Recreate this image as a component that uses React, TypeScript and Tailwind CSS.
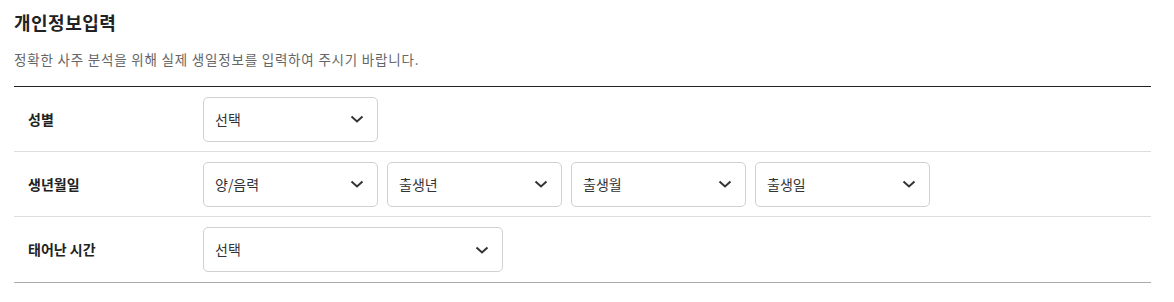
import { useState } from 'react';

type Field = {
  key: string;
  placeholder: string;
  options: string[];
  wide?: boolean;
};

const years = Array.from({ length: 100 }, (_, i) => `${2024 - i}년`);
const months = Array.from({ length: 12 }, (_, i) => `${i + 1}월`);
const days = Array.from({ length: 31 }, (_, i) => `${i + 1}일`);
const hours = ['모름', '자시 (23:30~01:29)', '축시 (01:30~03:29)', '인시 (03:30~05:29)', '묘시 (05:30~07:29)'];

const rows: { label: string; fields: Field[] }[] = [
  { label: '성별', fields: [{ key: 'gender', placeholder: '선택', options: ['남성', '여성'] }] },
  {
    label: '생년월일',
    fields: [
      { key: 'calendar', placeholder: '양/음력', options: ['양력', '음력', '음력(윤달)'] },
      { key: 'year', placeholder: '출생년', options: years },
      { key: 'month', placeholder: '출생월', options: months },
      { key: 'day', placeholder: '출생일', options: days },
    ],
  },
  { label: '태어난 시간', fields: [{ key: 'time', placeholder: '선택', options: hours, wide: true }] },
];

function Chevron() {
  return (
    <svg
      width="14"
      height="8"
      viewBox="0 0 14 8"
      fill="none"
      className="pointer-events-none absolute right-[14px] top-1/2 -translate-y-1/2"
    >
      <path d="M1.5 1.5L7 6.5L12.5 1.5" stroke="#333" strokeWidth="2" />
    </svg>
  );
}

function SelectBox({ field, value, onChange }: { field: Field; value: string; onChange: (v: string) => void }) {
  return (
    <div className={`relative h-[45px] ${field.wide ? 'w-[300px]' : 'w-[175px]'}`}>
      <select
        value={value}
        onChange={(e) => onChange(e.target.value)}
        className="h-full w-full appearance-none rounded-[5px] border border-[#d0d0d0] bg-white pl-[11px] pr-8 text-[14px] text-[#333] outline-none"
      >
        <option value="">{field.placeholder}</option>
        {field.options.map((o) => (
          <option key={o} value={o}>
            {o}
          </option>
        ))}
      </select>
      <Chevron />
    </div>
  );
}

export default function App() {
  const [values, setValues] = useState<Record<string, string>>({});

  return (
    <div
      className="bg-white px-[14px] pt-[10px] pb-5 text-[#222]"
      style={{ fontFamily: '"Noto Sans CJK KR", "Noto Sans", sans-serif' }}
    >
      <h2 className="text-[18px] font-bold leading-6 tracking-[0.5px] text-[#222]">개인정보입력</h2>
      <p className="mt-[15px] text-[13.5px] leading-5 tracking-[0.8px] text-[#666]">
        정확한 사주 분석을 위해 실제 생일정보를 입력하여 주시기 바랍니다.
      </p>
      <div className="mt-[17px] w-[1137px] border-t border-b border-t-[#222] border-b-[#aaa]">
        {rows.map((row, i) => (
          <div
            key={row.label}
            className={`flex h-[65px] items-center ${i < rows.length - 1 ? 'border-b border-[#ddd]' : ''}`}
          >
            <div className="w-[189px] pl-[14px] text-[14px] font-bold text-[#222]">{row.label}</div>
            <div className="flex gap-[9px]">
              {row.fields.map((f) => (
                <SelectBox
                  key={f.key}
                  field={f}
                  value={values[f.key] ?? ''}
                  onChange={(v) => setValues((s) => ({ ...s, [f.key]: v }))}
                />
              ))}
            </div>
          </div>
        ))}
      </div>
    </div>
  );
}
